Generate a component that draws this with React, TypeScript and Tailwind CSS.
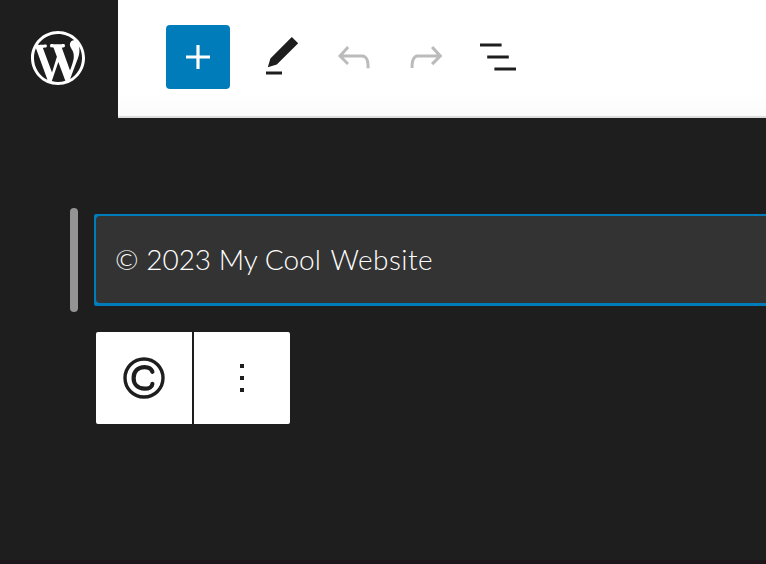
import type { ReactNode } from "react";

function Icon({ children, className = "" }: { children: ReactNode; className?: string }) {
  return (
    <svg viewBox="0 0 24 24" fill="currentColor" className={`h-12 w-12 shrink-0 ${className}`} aria-hidden="true">
      {children}
    </svg>
  );
}

function WordPressLogo() {
  return (
    <svg viewBox="0 0 20 20" fill="white" fillRule="evenodd" className="h-[54px] w-[54px]" aria-hidden="true">
      <path d="M20 10c0-5.51-4.49-10-10-10C4.48 0 0 4.49 0 10c0 5.52 4.48 10 10 10 5.51 0 10-4.48 10-10zM7.78 15.37L4.37 6.22c.55-.02 1.17-.08 1.17-.08.5-.06.44-1.13-.06-1.11 0 0-1.45.11-2.37.11-.18 0-.37 0-.58-.01C4.12 2.69 6.87 1.11 10 1.11c2.33 0 4.45.87 6.05 2.34-.68-.11-1.65.39-1.65 1.58 0 .74.45 1.36.9 2.1.35.61.55 1.36.55 2.46 0 1.49-1.4 5-1.4 5l-3.03-8.37c.54-.02.82-.17.82-.17.5-.05.44-1.25-.06-1.22 0 0-1.44.12-2.38.12-.87 0-2.33-.12-2.33-.12-.5-.03-.56 1.2-.06 1.22l.92.08 1.26 3.41zM17.41 10c.24-.64.74-1.87.43-4.25.7 1.29 1.05 2.71 1.05 4.25 0 3.29-1.73 6.24-4.4 7.78.97-2.59 1.94-5.2 2.92-7.78zM6.1 18.09C3.12 16.65 1.11 13.53 1.11 10c0-1.3.23-2.48.72-3.59C3.25 10.3 4.67 14.2 6.1 18.09zm4.03-6.63l2.58 6.98c-.86.29-1.76.45-2.71.45-.79 0-1.57-.11-2.29-.33.81-2.38 1.62-4.74 2.42-7.1z" />
    </svg>
  );
}

function TopBar() {
  return (
    <header className="flex h-[118px]">
      <div className="flex w-[118px] shrink-0 items-center justify-center pr-0.5 pb-0.5">
        <WordPressLogo />
      </div>
      <div className="flex flex-1 items-start border-b-2 border-[#dddddd] bg-linear-to-b from-white from-80% to-[#fbfbfb] pt-[25px] pl-12 text-[#1e1e1e]">
        <button className="flex h-16 w-16 items-center justify-center rounded bg-[#007cba] text-white">
          <Icon>
            <path d="M18 11.2h-5.2V6h-1.6v5.2H6v1.6h5.2V18h1.6v-5.2H18z" />
          </Icon>
        </button>
        <div className="ml-7 flex gap-6 pt-2">
          <Icon>
            <path d="M20.1 5.1L16.9 2 6.2 12.7l-1.3 4.4 4.5-1.3L20.1 5.1zM4 20.8h8v-1.5H4v1.5z" />
          </Icon>
          <Icon className="text-[#bbbbbb]">
            <path d="M18.3 11.7c-.6-.6-1.4-.9-2.3-.9H6.7l2.9-3.3-1.1-1-4.5 5L8.5 16l1-1-2.7-2.7H16c.5 0 .9.2 1.3.5 1 1 1 3.4 1 4.5v.3h1.5v-.2c0-1.5 0-4.3-1.5-5.7z" />
          </Icon>
          <Icon className="text-[#bbbbbb]">
            <path d="M15.6 6.5l-1.1 1 2.9 3.3H8c-.9 0-1.7.3-2.3.9-1.4 1.5-1.4 4.2-1.4 5.6v.2h1.5v-.3c0-1.1 0-3.5 1-4.5.3-.3.7-.5 1.3-.5h9.2L14.5 15l1.1 1.1 4.6-4.6-4.6-5z" />
          </Icon>
          <Icon>
            <path d="M13.8 5.2H3v1.5h10.8V5.2zm-3.6 12v1.5H21v-1.5H10.2zm7.2-6H6.6v1.5h10.8v-1.5z" />
          </Icon>
        </div>
      </div>
    </header>
  );
}

function BlockToolbar() {
  return (
    <div className="mt-5 ml-24 flex h-[92px] w-[194px] gap-0.5 overflow-hidden rounded-xs text-[#1e1e1e]">
      <button className="flex w-24 items-center justify-center bg-white">
        <svg viewBox="0 0 48 48" fill="none" stroke="currentColor" className="h-12 w-12" aria-hidden="true">
          <circle cx="24" cy="24" r="19" strokeWidth="3.4" />
          <path d="M32.4 17.8C31.3 14.6 28.2 13.1 24.6 13.1C18 13.1 13.6 17.4 13.6 24C13.6 30.6 18 34.7 24.6 34.7C29 34.7 32.2 32.8 32.4 29.8" strokeWidth="4.2" strokeLinecap="round" strokeLinejoin="round" />
        </svg>
      </button>
      <button className="flex w-24 flex-col items-center justify-center gap-2 bg-white">
        <span className="h-1 w-1 bg-current" />
        <span className="h-1 w-1 bg-current" />
        <span className="h-1 w-1 bg-current" />
      </button>
    </div>
  );
}

export default function App() {
  return (
    <div className="flex h-[564px] w-full flex-col overflow-hidden border-b-4 border-[#1d171b] bg-[#1e1e1e]">
      <TopBar />
      <div className="mt-[90px] flex h-[104px] pl-[70px]">
        <div className="w-2 shrink-0 rounded-full bg-[#949494]" />
        <div className="mt-1.5 ml-4 flex h-[92px] flex-1 rounded-l-xs bg-[#007cba] pt-0.5 pb-[3px] pl-0.5">
          <div className="flex flex-1 items-center rounded-l-[4px] bg-[#333333] pb-0.5 pl-[19px]">
            <p className="whitespace-nowrap font-['Lato',sans-serif] text-[28px] leading-9 font-light text-white">
              © 2023 My Cool <span className="ml-0.5 tracking-[0.45px]">Website</span>
            </p>
          </div>
        </div>
      </div>
      <BlockToolbar />
    </div>
  );
}
